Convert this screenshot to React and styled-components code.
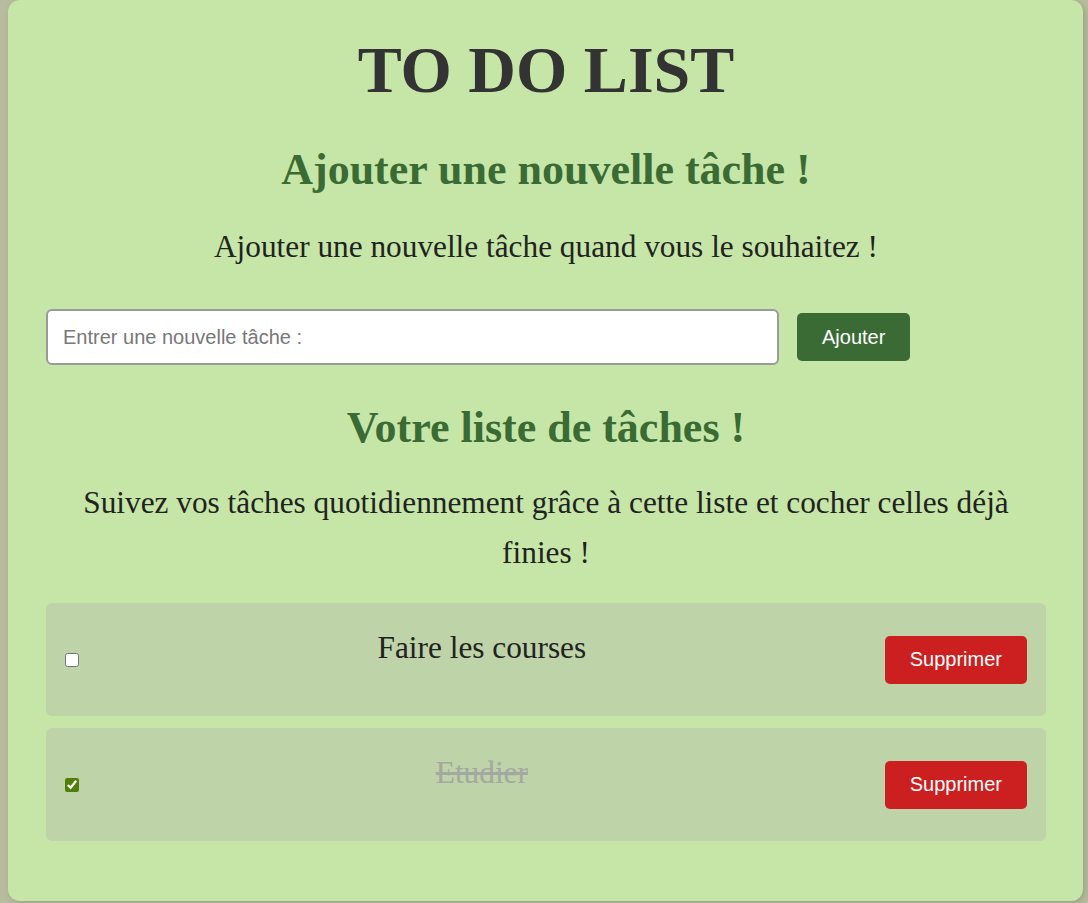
import React, { useState } from "react";
import styled, { createGlobalStyle } from "styled-components";

const GlobalStyle = createGlobalStyle`
  html, body {
    margin: 0;
    padding: 0;
    background: #b8bc9e;
  }
  body {
    font-family: "Liberation Serif", "Times New Roman", serif;
  }
`;

const Page = styled.div`
  padding: 0 5px 3px 8px;
`;

const Card = styled.main`
  box-sizing: border-box;
  width: 1075px;
  background: #c6e6a7;
  border-radius: 12px;
  padding: 37px 37px 60px 38px;
  box-shadow: 2px 2px 6px rgba(0, 0, 0, 0.15);
  display: flex;
  flex-direction: column;
  align-items: stretch;
`;

const Title = styled.h1`
  margin: 0;
  font-size: 66px;
  line-height: 66px;
  font-weight: 700;
  color: #333333;
  text-align: center;
`;

const SectionTitle = styled.h2`
  margin: ${(p) => p.$top}px 0 0;
  font-size: 44px;
  line-height: 44px;
  font-weight: 700;
  color: #3a6b35;
  text-align: center;
`;

const Lead = styled.p`
  margin: ${(p) => p.$top}px 0 0;
  font-size: 31.3px;
  line-height: 50px;
  color: #222222;
  text-align: center;
`;

const AddRow = styled.form`
  margin-top: 37px;
  display: flex;
  align-items: center;
  gap: 18px;
`;

const TaskInput = styled.input`
  box-sizing: border-box;
  width: 733px;
  height: 56px;
  border: 2px solid #9a9a9a;
  border-radius: 6px;
  background: #ffffff;
  padding: 0 15px;
  font-family: "Liberation Sans", Arial, sans-serif;
  font-size: 20px;
  color: #222;
  outline: none;
  &::placeholder {
    color: #777777;
  }
`;

const Button = styled.button`
  height: 48px;
  padding: 0 25px;
  border: none;
  border-radius: 5px;
  background: ${(p) => p.$bg};
  color: #ffffff;
  font-family: "Liberation Sans", Arial, sans-serif;
  font-size: 20px;
  cursor: pointer;
`;

const List = styled.ul`
  list-style: none;
  margin: 25px 0 0;
  padding: 0;
  display: flex;
  flex-direction: column;
  gap: 12px;
`;

const Item = styled.li`
  box-sizing: border-box;
  height: 113px;
  padding: 0 19px;
  background: #bed3a7;
  border-radius: 6px;
  display: flex;
  align-items: center;
`;

const Check = styled.input`
  margin: 0;
  width: 14px;
  height: 14px;
  accent-color: #4f7f08;
`;

const TaskText = styled.span`
  flex: 1;
  text-align: center;
  font-size: 31.3px;
  line-height: 36px;
  padding-bottom: 24px;
  color: ${(p) => (p.$done ? "#a3a8a0" : "#222222")};
  text-decoration: ${(p) => (p.$done ? "line-through" : "none")};
`;

export default function App() {
  const [tasks, setTasks] = useState([
    { id: 1, text: "Faire les courses", done: false },
    { id: 2, text: "Etudier", done: true },
  ]);

  const toggle = (id) =>
    setTasks((t) => t.map((x) => (x.id === id ? { ...x, done: !x.done } : x)));
  const remove = (id) => setTasks((t) => t.filter((x) => x.id !== id));

  return (
    <Page>
      <GlobalStyle />
      <Card>
        <Title>TO DO LIST</Title>
        <SectionTitle $top={45}>Ajouter une nouvelle tâche !</SectionTitle>
        <Lead $top={30}>Ajouter une nouvelle tâche quand vous le souhaitez !</Lead>
        <AddRow onSubmit={(e) => e.preventDefault()}>
          <TaskInput type="text" placeholder="Entrer une nouvelle tâche :" />
          <Button type="submit" $bg="#3a6b35">
            Ajouter
          </Button>
        </AddRow>
        <SectionTitle $top={41}>Votre liste de tâches !</SectionTitle>
        <Lead $top={28}>
          Suivez vos tâches quotidiennement grâce à cette liste et cocher celles déjà finies !
        </Lead>
        <List>
          {tasks.map((t) => (
            <Item key={t.id}>
              <Check type="checkbox" checked={t.done} onChange={() => toggle(t.id)} />
              <TaskText $done={t.done}>{t.text}</TaskText>
              <Button type="button" $bg="#cc1f1f" onClick={() => remove(t.id)}>
                Supprimer
              </Button>
            </Item>
          ))}
        </List>
      </Card>
    </Page>
  );
}
